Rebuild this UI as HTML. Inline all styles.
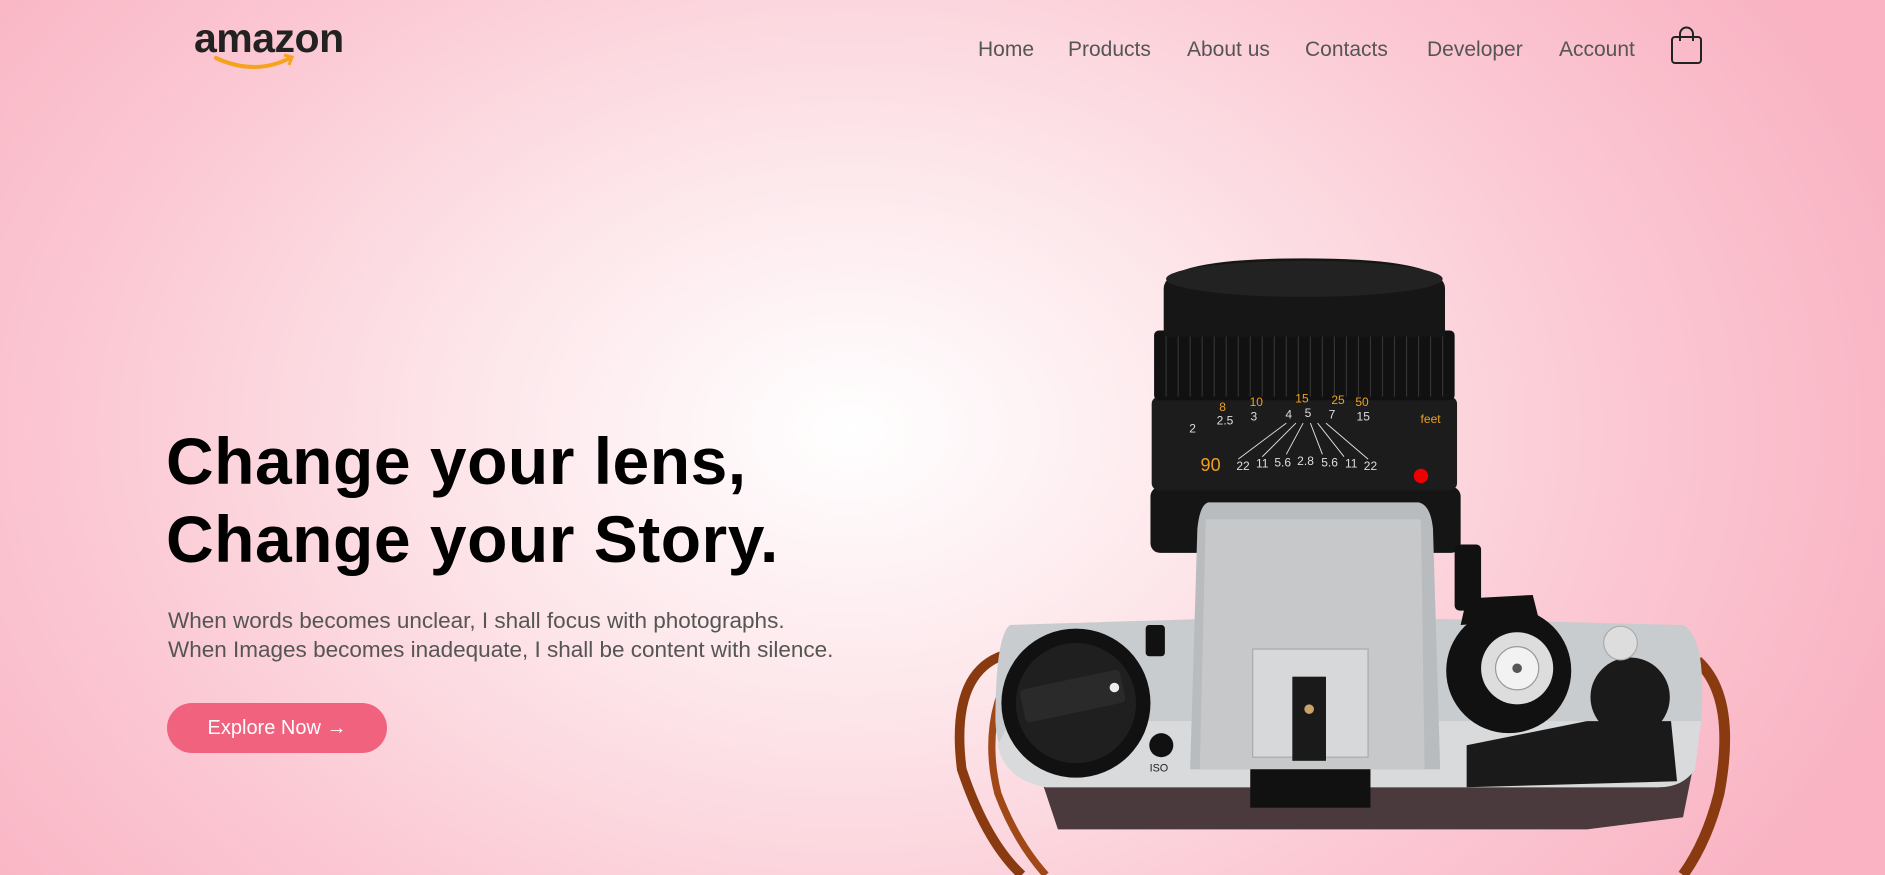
<!DOCTYPE html>
<html><head><meta charset="utf-8"><style>
html,body{margin:0;padding:0;width:1885px;height:875px;overflow:hidden}
body{background:radial-gradient(ellipse 1100px 800px at 850px 430px,#fff 0%,#fde6ea 35%,#fbc8d3 70%,#f9b3c3 100%);font-family:"Liberation Sans",sans-serif;position:relative}
.logo{position:absolute;left:194px;top:15px;font-weight:bold;font-size:41px;color:#222;letter-spacing:-0.5px}
.nav{position:absolute;top:38px;left:978px;font-size:21px;color:#555}
.nav span{position:absolute;white-space:nowrap}
h1{position:absolute;left:166px;top:422px;margin:0;font-size:66px;line-height:78px;font-weight:bold;color:#000;letter-spacing:0.5px}
p{position:absolute;left:168px;top:606px;margin:0;font-size:22.5px;line-height:29px;color:#555}
.btn{position:absolute;left:167px;top:703px;width:220px;height:50px;border-radius:25px;background:#f0627d;color:#fff;font-size:20px;line-height:50px;text-align:center}
svg.cam{position:absolute;left:0;top:0}
</style></head><body>
<div class="logo">amazon</div>
<svg style="position:absolute;left:0;top:0" width="400" height="80"><path d="M216 58 Q255 76 290 58" stroke="#f7a21b" stroke-width="4" fill="none" stroke-linecap="round"/><path d="M284 55 L292 57 L289 65" stroke="#f7a21b" stroke-width="3" fill="none"/></svg>
<div class="nav">
<span style="left:0">Home</span><span style="left:90px">Products</span><span style="left:209px">About us</span><span style="left:327px">Contacts</span><span style="left:449px">Developer</span><span style="left:581px">Account</span>
</div>
<svg style="position:absolute;left:1668px;top:26px" width="38" height="40" viewBox="0 0 38 40"><rect x="4" y="11" width="29" height="26" rx="3" fill="none" stroke="#222" stroke-width="2"/><path d="M12 15 V8 a6.5 6.5 0 0 1 13 0 V15" fill="none" stroke="#222" stroke-width="2"/></svg>
<h1>Change your lens,<br>Change your Story.</h1>
<p>When words becomes unclear, I shall focus with photographs.<br>When Images becomes inadequate, I shall be content with silence.</p>
<div class="btn">Explore Now →</div>
<svg class="cam" width="1885" height="875" viewBox="0 0 1568 728" preserveAspectRatio="none">
<path d="M835 545 Q790 560 800 640 Q820 700 850 728" stroke="#8a3a10" stroke-width="8" fill="none"/>
<path d="M845 550 Q815 600 830 660 Q845 700 870 728" stroke="#a04818" stroke-width="6" fill="none"/>
<path d="M1412 550 Q1445 580 1430 660 Q1420 700 1400 728" stroke="#8a3a10" stroke-width="9" fill="none"/>
<path d="M860 630 L1410 630 L1400 680 L1320 690 L880 690 Z" fill="#4a3a3e"/>
<path d="M840 520 L1000 515 L1200 515 L1400 520 Q1420 530 1415 600 Q1410 645 1380 655 L870 655 Q830 645 828 600 Q828 530 840 520 Z" fill="#c9ccce"/>
<path d="M840 600 L1415 600 L1410 640 Q1400 655 1380 655 L870 655 Q835 648 830 620 Z" fill="#d8dadb"/>
<rect x="957" y="405" width="258" height="55" rx="8" fill="#151515"/>
<rect x="958" y="330" width="254" height="78" rx="6" fill="#1c1c1c"/>
<rect x="960" y="275" width="250" height="58" rx="4" fill="#111"/>
<g stroke="#333" stroke-width="1">
<path d="M970 280 V330 M980 280 V330 M990 280 V330 M1000 280 V330 M1010 280 V330 M1020 280 V330 M1030 280 V330 M1040 280 V330 M1050 280 V330 M1060 280 V330 M1070 280 V330 M1080 280 V330 M1090 280 V330 M1100 280 V330 M1110 280 V330 M1120 280 V330 M1130 280 V330 M1140 280 V330 M1150 280 V330 M1160 280 V330 M1170 280 V330 M1180 280 V330 M1190 280 V330 M1200 280 V330"/>
</g>
<path d="M968 240 Q968 215 1085 215 Q1202 215 1202 240 L1202 280 L968 280 Z" fill="#161616"/>
<ellipse cx="1085" cy="232" rx="115" ry="15" fill="#222"/>
<g font-family="Liberation Sans,sans-serif" font-size="10" text-anchor="middle">
<g fill="#f0a020"><text x="1017" y="342">8</text><text x="1045" y="338">10</text><text x="1083" y="335">15</text><text x="1113" y="336">25</text><text x="1133" y="338">50</text><text x="1190" y="352">feet</text></g>
<g fill="#ddd"><text x="992" y="360">2</text><text x="1019" y="353">2.5</text><text x="1043" y="350">3</text><text x="1072" y="348">4</text><text x="1088" y="347">5</text><text x="1108" y="348">7</text><text x="1134" y="350">15</text>
<text x="1034" y="391">22</text><text x="1050" y="389">11</text><text x="1067" y="388">5.6</text><text x="1086" y="387">2.8</text><text x="1106" y="388">5.6</text><text x="1124" y="389">11</text><text x="1140" y="391">22</text></g>
<text x="1007" y="392" font-size="15" fill="#f0a020">90</text>
</g>
<path d="M1030 382 L1070 352 M1050 380 L1078 352 M1070 378 L1084 352 M1100 378 L1090 352 M1118 380 L1096 352 M1138 382 L1103 352" stroke="#ddd" stroke-width="0.8"/>
<circle cx="1182" cy="396" r="6" fill="#e00"/>
<path d="M1005 418 L1180 418 Q1190 420 1192 440 L1198 640 L990 640 L996 440 Q998 420 1005 418 Z" fill="#b9bcbf"/>
<path d="M1003 432 L1182 432 L1185 640 L998 640 Z" fill="#c6c8ca"/>
<rect x="1042" y="540" width="96" height="90" fill="#d6d8d9" stroke="#aaa"/>
<rect x="1075" y="563" width="28" height="70" fill="#1a1a1a"/>
<circle cx="1089" cy="590" r="4" fill="#c9a36a"/>
<rect x="1040" y="640" width="100" height="32" fill="#111"/>
<circle cx="895" cy="585" r="62" fill="#111"/>
<circle cx="895" cy="585" r="50" fill="#1f1f1f"/>
<rect x="850" y="565" width="85" height="28" rx="4" fill="#2a2a2a" transform="rotate(-12 893 580)"/>
<circle cx="927" cy="572" r="4" fill="#eee"/>
<circle cx="966" cy="620" r="10" fill="#111"/>
<text x="964" y="642" font-size="9" fill="#222" font-family="Liberation Sans,sans-serif" text-anchor="middle">ISO</text>
<rect x="953" y="520" width="16" height="26" rx="3" fill="#111"/>
<path d="M1220 498 L1275 495 L1280 515 L1215 520 Z" fill="#111"/>
<circle cx="1255" cy="558" r="52" fill="#111"/>
<circle cx="1262" cy="556" r="30" fill="#ddd"/>
<circle cx="1262" cy="556" r="18" fill="#f2f2f2" stroke="#999"/>
<circle cx="1262" cy="556" r="4" fill="#555"/>
<rect x="1210" y="453" width="22" height="55" rx="4" fill="#111"/>
<circle cx="1356" cy="580" r="33" fill="#1a1a1a"/>
<path d="M1220 620 L1320 600 L1390 600 L1395 650 L1220 655 Z" fill="#1a1a1a"/>
<circle cx="1348" cy="535" r="14" fill="#ddd" stroke="#aaa"/>
</svg>
</body></html>
